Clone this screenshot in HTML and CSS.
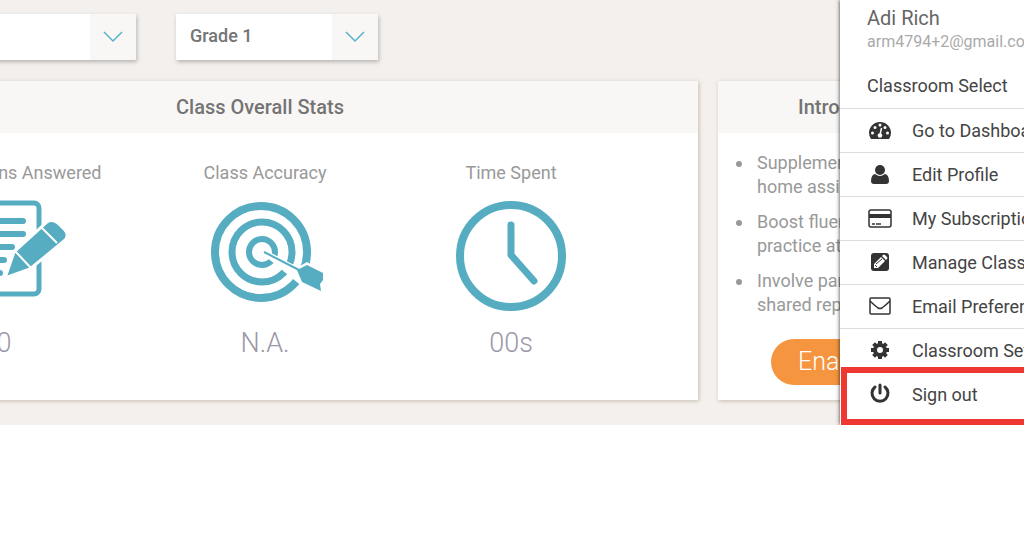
FILE: index.html
```html
<!DOCTYPE html>
<html lang="en">
<head>
    <meta charset="UTF-8">
    <meta name="viewport" content="width=device-width, initial-scale=1">
    <title>Class Overall Stats</title>
    <link rel="stylesheet" href="styles.css">
</head>
<body>
    <div class="page">
        <main class="content">
            <div class="filters">
                <div class="dropdown">
                    <select aria-label="Class">
                        <option></option>
                    </select>
                    <span class="arrow">
                        <svg width="20" height="12" viewBox="0 0 20 12"><path d="M1 1l9 9 9-9"/></svg>
                    </span>
                </div>
                <div class="dropdown">
                    <select aria-label="Grade">
                        <option>Grade 1</option>
                    </select>
                    <span class="arrow">
                        <svg width="20" height="12" viewBox="0 0 20 12"><path d="M1 1l9 9 9-9"/></svg>
                    </span>
                </div>
            </div>

            <div class="cards">
                <section class="card">
                    <h2>Class Overall Stats</h2>
                    <div class="stats">
                        <div class="stat answered">
                            <h3>Questions Answered</h3>
                            <svg width="112" height="112" viewBox="0 0 112 112">
                                <rect x="2" y="2" width="74" height="91" rx="5" fill="none" stroke="#56adc1" stroke-width="5"/>
                                <path d="M12 20H60M12 33H60M12 46H49M12 59H41M12 72H37" fill="none" stroke="#56adc1" stroke-width="6" stroke-linecap="round"/>
                                <path d="M42 77l9-26 33-30q6-4 13 3l5 5q5 6-1 11L67 68z" fill="#56adc1" stroke="#fff" stroke-width="3"/>
                                <path d="M52 50l16 17M78 26l16 16" stroke="#fff" stroke-width="2"/>
                            </svg>
                            <p>0</p>
                        </div>
                        <div class="stat">
                            <h3>Class Accuracy</h3>
                            <svg width="112" height="112" viewBox="0 0 112 112">
                                <g fill="none" stroke="#56adc1">
                                    <circle cx="52" cy="51" r="46" stroke-width="8"/>
                                    <circle cx="53" cy="51" r="30" stroke-width="7"/>
                                    <circle cx="53" cy="51" r="13" stroke-width="6"/>
                                </g>
                                <path d="M55 51L89 69l9-5 15 9-1 16-19-7z" fill="#fff" stroke="#fff" stroke-width="5"/>
                                <path d="M55 51L90 69" stroke="#56adc1" stroke-width="2"/>
                                <path d="M88 69l10-5 16 8v7l-3 4 1 7-19-9z" fill="#56adc1"/>
                            </svg>
                            <p>N.A.</p>
                        </div>
                        <div class="stat">
                            <h3>Time Spent</h3>
                            <svg width="112" height="112" viewBox="0 0 112 112">
                                <g fill="none" stroke="#56adc1" stroke-linecap="round" stroke-linejoin="round">
                                    <circle cx="56" cy="55" r="51" stroke-width="8"/>
                                    <path d="M56 24V54L79 80" stroke-width="7"/>
                                </g>
                            </svg>
                            <p>00s</p>
                        </div>
                    </div>
                </section>

                <section class="card intro">
                    <h2>Introducing</h2>
                    <ul>
                        <li>Supplement<br>home assignments</li>
                        <li>Boost fluency<br>practice at home</li>
                        <li>Involve parents<br>shared reports</li>
                    </ul>
                    <button type="button">Enable</button>
                </section>
            </div>
        </main>

        <nav class="menu">
            <div class="user">
                <div class="name">Adi Rich</div>
                <div class="email">arm4794+2@gmail.com</div>
                <div class="title">Classroom Select</div>
            </div>
            <ul>
                <li><a href="#">
                    <svg width="24" height="24" viewBox="0 0 24 24">
                        <path d="M3 20Q1 17 1 14a11 11 0 0 1 22 0q0 3-2 6z" fill="#333"/>
                        <g fill="#fff">
                            <circle cx="4.5" cy="14" r="1.5"/><circle cx="7" cy="8.5" r="1.5"/><circle cx="12" cy="6" r="1.5"/><circle cx="17" cy="8.5" r="1.5"/><circle cx="19.5" cy="14" r="1.5"/><circle cx="12" cy="16.5" r="2.3"/>
                        </g>
                        <path d="M12 16l1.5-7" stroke="#fff" stroke-width="1.5"/>
                    </svg>
                    Go to Dashboard</a></li>
                <li><a href="#">
                    <svg width="24" height="24" viewBox="0 0 24 24">
                        <path d="M7 11q-4 1-4 7 0 3 3 3h12q3 0 3-3 0-6-4-7-5 4-10 0z" fill="#333"/>
                        <circle cx="12" cy="7" r="5" fill="#333"/>
                    </svg>
                    Edit Profile</a></li>
                <li><a href="#">
                    <svg width="24" height="24" viewBox="0 0 24 24">
                        <rect x="1" y="3" width="22" height="17" rx="2" fill="none" stroke="#333" stroke-width="1.5"/>
                        <path d="M1 7h22v4H1z" fill="#333"/>
                        <path d="M4 17h3M8 17h5" stroke="#333" stroke-width="1.5"/>
                    </svg>
                    My Subscription</a></li>
                <li><a href="#">
                    <svg width="24" height="24" viewBox="0 0 24 24">
                        <rect x="3" y="2" width="18" height="18" rx="3" fill="#333"/>
                        <path d="M6 17v-4l7-7 4 4-7 7zM14 5l1-1q1-1 2 0l2 2q1 1 0 2l-1 1z" fill="#fff"/>
                        <path d="M8 13l6-5M7 14l2 2" stroke="#333"/>
                    </svg>
                    Manage Classes</a></li>
                <li><a href="#">
                    <svg width="24" height="24" viewBox="0 0 24 24">
                        <rect x="2" y="3" width="20" height="16" rx="1" fill="none" stroke="#333" stroke-width="1.5"/>
                        <path d="M2 6q4 4 8 7 2 1 4 0 4-3 8-7" fill="none" stroke="#333" stroke-width="1.5"/>
                    </svg>
                    Email Preferences</a></li>
                <li><a href="#">
                    <svg width="24" height="24" viewBox="0 0 24 24">
                        <circle cx="12" cy="11" r="5" fill="none" stroke="#333" stroke-width="4"/>
                        <path d="M12 2v3M12 17v3M3 11h3M18 11h3M5.6 4.6l2 2M16.4 15.4l2 2M5.6 17.400l2-2M16.4 6.6l2-2" stroke="#333" stroke-width="4"/>
                    </svg>
                    Classroom Settings</a></li>
                <li class="sign-out"><a href="#">
                    <svg width="24" height="24" viewBox="0 0 24 24">
                        <path d="M7 4a8 8 0 1 0 10 0M12 2v8" fill="none" stroke="#333" stroke-width="3" stroke-linecap="round"/>
                    </svg>
                    Sign out</a></li>
            </ul>
        </nav>
    </div>
</body>
</html>
```
FILE: styles.css
```css
*, *::before, *::after {
    box-sizing: border-box;
}

body {
    margin: 0;
    background-color: white;
    font-family: Roboto, "Liberation Sans", sans-serif;
    font-size: 18px;
    line-height: 24px;
    color: #999;
}

h2, h3, p, ul {
    margin: 0;
    padding: 0;
}

.page {
    position: relative;
    overflow: hidden;
    background-color: #f4f0ed;
}

/* the board starts beyond the left edge */
.content {
    margin-left: -178px;
    padding: 14px 0 25px;
}

.filters {
    display: flex;
    gap: 40px;
    padding-left: 112px;
    margin-bottom: 21px;
}

.dropdown {
    position: relative;
    width: 202px;
    height: 46px;
    background-color: white;
    box-shadow: 1px 2px 4px rgba(0, 0, 0, 0.25);
}

.dropdown select {
    appearance: none;
    width: 100%;
    height: 100%;
    padding: 0 60px 2px 14px;
    border: none;
    background: none;
    font: inherit;
    font-weight: 500;
    color: #747474;
}

.arrow {
    position: absolute;
    top: 0;
    right: 0;
    bottom: 0;
    width: 46px;
    display: flex;
    align-items: center;
    justify-content: center;
    background-color: #f9f7f6;
    pointer-events: none;
}

.arrow path {
    fill: none;
    stroke: #56b3c9;
    stroke-width: 1.5;
}

.cards {
    display: grid;
    grid-template-columns: 1fr 306px;
    gap: 20px;
}

.card {
    min-height: 319px;
    background-color: white;
    box-shadow: 1px 1px 4px rgba(130, 110, 80, 0.4);
}

.card h2 {
    padding: 14px 0;
    background-color: #f9f7f6;
    font-size: 20px;
    font-weight: 500;
    line-height: 24px;
    text-align: center;
    color: #747474;
}

.stats {
    display: grid;
    grid-template-columns: repeat(3, 1fr);
    padding: 28px 64px 0 74px;
    text-align: center;
}

.stat h3 {
    font-size: 18px;
    font-weight: 400;
    margin-bottom: 16px;
}

.stat svg {
    display: block;
    margin: 0 auto 14px;
    overflow: visible;
}

.stat p {
    font-size: 27px;
    font-weight: 300;
    line-height: 32px;
    color: #9b98a8;
}

.answered p {
    padding-right: 30px;
}

.card.intro h2 {
    padding-left: 80px;
    text-align: left;
}

.intro ul {
    padding: 18px 0 0 18px;
    list-style: none;
    white-space: nowrap;
}

.intro li {
    position: relative;
    padding-left: 21px;
    margin-bottom: 11px;
}

.intro li::before {
    content: "";
    position: absolute;
    top: 10px;
    left: 0;
    width: 6px;
    height: 6px;
    border-radius: 50%;
    background-color: #999;
}

.intro button {
    margin: 11px 0 0 53px;
    height: 46px;
    padding: 0 27px;
    border: none;
    border-radius: 23px;
    background-color: #f5953f;
    font: inherit;
    font-size: 25px;
    font-weight: 300;
    color: white;
}

.menu {
    position: absolute;
    top: 0;
    right: 0;
    bottom: 0;
    width: 184px;
    background-color: white;
    box-shadow: 0 0 4px rgba(0, 0, 0, 0.8);
    color: #444;
    white-space: nowrap;
}

.user {
    height: 108px;
    padding: 6px 0 0 27px;
    overflow: hidden;
}

.name {
    font-size: 20px;
    color: #666;
}

.email {
    font-size: 16px;
    color: #aaa;
    margin-bottom: 20px;
}

.menu ul {
    list-style: none;
}

.menu li {
    position: relative;
    border-top: 1px solid #ddd;
}

.menu a {
    display: flex;
    align-items: center;
    gap: 20px;
    height: 43px;
    padding-left: 28px;
    overflow: hidden;
    color: #444;
    text-decoration: none;
}

.menu a svg {
    flex: none;
}

/* frame round the last entry, open at the window's edge */
.sign-out::after {
    content: "";
    position: absolute;
    top: -6px;
    left: 1px;
    right: -6px;
    height: 58px;
    border: 6px solid #ef3832;
    pointer-events: none;
}
```
